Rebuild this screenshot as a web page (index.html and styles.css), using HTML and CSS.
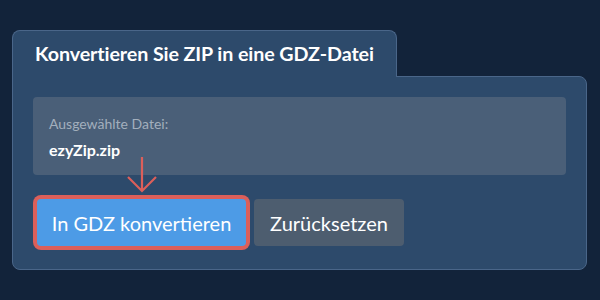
FILE: index.html
```html
<!DOCTYPE html>
<html lang="de">
<head>
  <meta charset="UTF-8">
  <meta name="viewport" content="width=device-width, initial-scale=1.0">
  <title>ZIP in GDZ konvertieren</title>
  <link rel="stylesheet" href="styles.css">
</head>
<body>
  <div class="converter">
    <div class="tab">
      <h1>Konvertieren Sie ZIP in eine GDZ-Datei</h1>
    </div>

    <div class="panel">
      <div class="file-info">
        <div class="file-label">Ausgewählte Datei:</div>
        <div class="file-name">ezyZip.zip</div>
      </div>

      <div class="actions">
        <div class="highlight">
          <!-- hint arrow pointing at the convert button -->
          <svg class="hint-arrow" width="32" height="38" viewBox="0 0 32 38">
            <path d="M16 1 V35 M2 21 L16 35 L30 21" fill="none" stroke="#dc5f5a" stroke-width="2.2"/>
          </svg>
          <button type="button" class="btn btn-convert">In GDZ konvertieren</button>
        </div>
        <button type="button" class="btn btn-reset">Zurücksetzen</button>
      </div>
    </div>
  </div>
</body>
</html>
```

FILE: styles.css
```css
html, body {
  margin: 0;
  padding: 0;
}

body {
  background-color: #12233a;
  font-family: Lato, "Open Sans", sans-serif;
  color: #fff;
  width: 600px;
  height: 300px;
  overflow: hidden;
}

.converter {
  padding: 30px 0 0 12px;
  width: 575px;
}

/* Tab header */
.tab {
  display: inline-block;
  position: relative;
  z-index: 1;
  background-color: #2d4a6b;
  border: 1px solid #4a6689;
  border-bottom: none;
  border-radius: 8px 8px 0 0;
  padding: 0 22px 0 22px;
  height: 46px;
  margin-bottom: -1px;
}

.tab h1 {
  margin: 0;
  font-size: 19.7px;
  font-weight: 700;
  line-height: 46px;
  letter-spacing: -0.1px;
  white-space: nowrap;
}

/* Main panel */
.panel {
  background-color: #2d4a6b;
  border: 1px solid #4a6689;
  border-radius: 0 8px 8px 8px;
  padding: 20px 20px 23px 20px;
}

.file-info {
  background-color: #4a5f78;
  border-radius: 4px;
  padding: 18px 16px 19px 16px;
  height: 41px;
}

.file-label {
  font-size: 14px;
  color: #a3afbd;
  line-height: 18px;
}

.file-name {
  margin-top: 8px;
  font-size: 16px;
  font-weight: 700;
  line-height: 18px;
}

/* Buttons */
.actions {
  display: flex;
  gap: 8px;
  margin-top: 24px;
  padding-left: 4px;
}

.highlight {
  position: relative;
}

.hint-arrow {
  position: absolute;
  left: 89px;
  top: -43px;
}

.btn {
  height: 47px;
  border: none;
  border-radius: 4px;
  color: #fff;
  font-family: Lato, "Open Sans", sans-serif;
  font-size: 20px;
  padding: 0;
  white-space: nowrap;
  cursor: pointer;
}

.btn-convert {
  width: 209px;
  background-color: #4d9be6;
  box-shadow: 0 0 0 4px #dc5f5a;
}

.btn-reset {
  width: 150px;
  background-color: #4d5d6f;
}
```
